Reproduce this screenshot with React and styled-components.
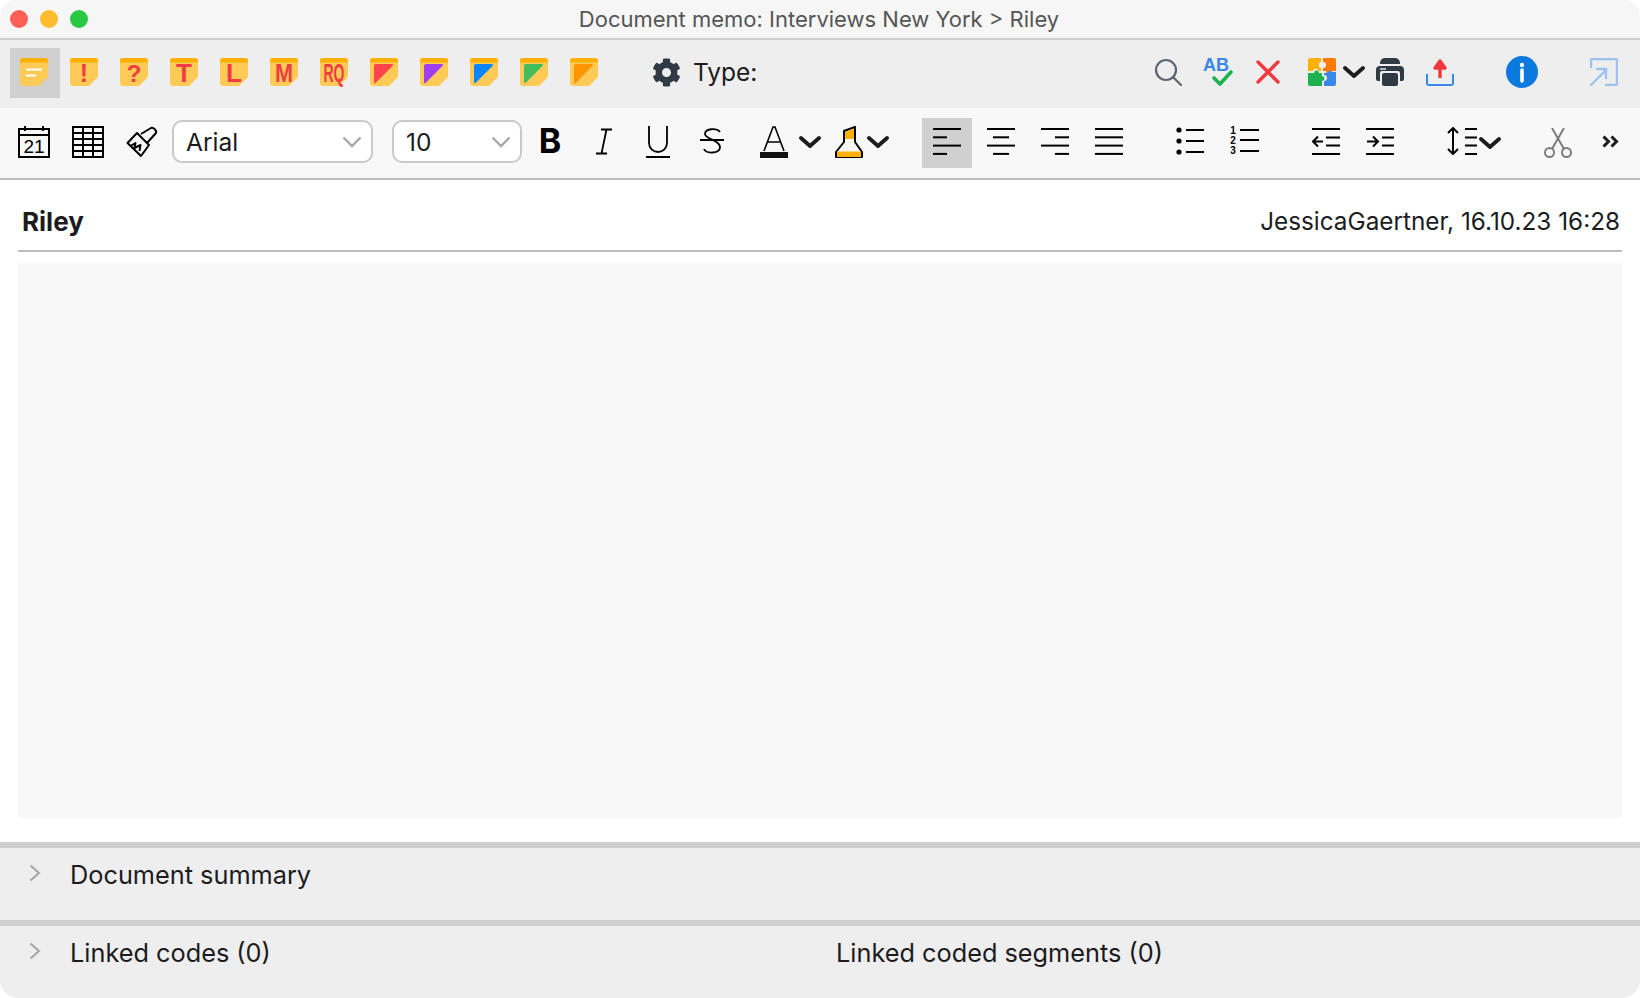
import styled, { createGlobalStyle } from 'styled-components';
import { FaCog } from 'react-icons/fa';

const GlobalStyle = createGlobalStyle`
  html, body {
    margin: 0;
    padding: 0;
    background: #fff;
  }
  body {
    font-family: Inter, "Noto Sans", "Liberation Sans", sans-serif;
    color: #1c1c1e;
  }
`;

const Window = styled.div`
  width: 1640px;
  height: 998px;
  display: flex;
  flex-direction: column;
  border-radius: 18px;
  overflow: hidden;
  background: #fff;
`;

const TitleBar = styled.header`
  height: 38px;
  flex: none;
  display: grid;
  grid-template-columns: 1fr auto 1fr;
  align-items: center;
  padding-right: 2px;
  background: #f6f6f6;
  border-bottom: 2px solid #cfcfcf;
`;

const Lights = styled.div`
  display: flex;
  gap: 12px;
  margin-left: 10px;
`;

const Light = styled.span`
  width: 18px;
  height: 18px;
  border-radius: 50%;
  background: ${(p) => p.$color};
`;

const Title = styled.div`
  font-size: 22px;
  color: #555;
  white-space: nowrap;
`;

const Tool = styled.button`
  width: ${(p) => p.$w || 50}px;
  height: 50px;
  flex: none;
  display: flex;
  align-items: center;
  justify-content: center;
  margin: 0 0 0 ${(p) => p.$ml || 0}px;
  padding: 0 0 ${(p) => p.$lift || 0}px;
  border: 0;
  background: ${(p) => (p.$active ? '#d0d0d0' : 'transparent')};
  color: #000;
`;

const NoteTool = styled(Tool)`
  padding: 0 2px 0 0;
`;

const TopBar = styled.div`
  height: 68px;
  box-sizing: border-box;
  flex: none;
  display: flex;
  align-items: center;
  padding: 0 11px 2px 10px;
  background: #eee;

  ${Tool} {
    padding-bottom: 2px;
  }
`;

const FormatBar = styled.div`
  height: 72px;
  box-sizing: border-box;
  flex: none;
  display: flex;
  align-items: center;
  padding: 0 0 0 7px;
  background: #f8f8f8;
  border-bottom: 2px solid #bdbdbd;
`;

const TypeBox = styled.div`
  display: flex;
  align-items: center;
  gap: 12px;
  margin: 0 0 2px 42px;
  font-size: 24.5px;
  color: #1c1c1e;
  svg {
    width: 29px;
    height: 29px;
    color: #2f3a45;
  }
`;

const PushRight = styled.div`
  display: flex;
  align-items: center;
  margin-left: auto;
`;

const Select = styled.div`
  width: ${(p) => p.$w}px;
  height: 43px;
  flex: none;
  box-sizing: border-box;
  display: flex;
  align-items: center;
  justify-content: space-between;
  margin: 0 0 3px ${(p) => p.$ml}px;
  padding: 0 9px 0 12px;
  background: #fff;
  border: 2px solid #c9c9c9;
  border-radius: 10px;
  font-size: 24.5px;
  color: #1c1c1e;
`;

const StepRow = styled.div`
  display: flex;
  gap: 4px;
  margin-left: ${(p) => p.$ml || 0}px;
`;

const MemoHead = styled.div`
  display: flex;
  align-items: center;
  justify-content: space-between;
  height: 72px;
  box-sizing: border-box;
  margin: 0 18px;
  padding: 12px 2px 0 4px;
  border-bottom: 2px solid #bdbdbd;
`;

const MemoName = styled.strong`
  font-size: 26px;
  font-weight: 700;
`;

const MemoMeta = styled.span`
  font-size: 24.3px;
`;

const MemoBody = styled.div`
  flex: 1;
  margin: 11px 18px 24px;
  background: #f8f8f8;
`;

const Section = styled.section`
  height: 78px;
  box-sizing: border-box;
  flex: none;
  display: flex;
  align-items: flex-start;
  padding: 12px 0 0 29px;
  background: #eee;
  border-top: 6px solid #cfcfcf;
  font-size: 25.3px;
  line-height: 30px;
  color: #1c1c1e;
`;

const Caret = styled.svg`
  width: 12px;
  height: 18px;
  flex: none;
  margin-top: 4px;
  fill: none;
  stroke: #a5a5a5;
  stroke-width: 2;
`;

const SectionLabel = styled.span`
  margin-left: 29px;
  width: ${(p) => (p.$w ? `${p.$w}px` : 'auto')};
`;

const NoteText = styled.text`
  font-family: "Liberation Sans", sans-serif;
  font-weight: 700;
  font-size: ${(p) => p.$size}px;
  fill: #f03c42;
  text-anchor: middle;
`;

const LooseSvg = styled.svg`
  overflow: visible;
`;

const NOTE_MARKS = [
  { text: '!', size: 25, squeeze: 0 },
  { text: '?', size: 24, squeeze: 0 },
  { text: 'T', size: 26, squeeze: 0 },
  { text: 'L', size: 26, squeeze: 0 },
  { text: 'M', size: 25, squeeze: 18 },
];

const FLAGS = ['#ff444b', '#a03ff0', '#0a84ff', '#43bd5b', '#ff9500'];

function NoteShape({ children }) {
  return (
    <LooseSvg width="28" height="28" viewBox="0 0 28 28">
      <path d="M3 0h22a3 3 0 0 1 3 3v16l-9 9H3a3 3 0 0 1-3-3V3a3 3 0 0 1 3-3z" fill="#ffca55" />
      <path d="M3 0h22a3 3 0 0 1 3 3v1.500H0V3a3 3 0 0 1 3-3z" fill="#ffb000" />
      {children}
    </LooseSvg>
  );
}

function NoteMark({ text, size, squeeze }) {
  return (
    <NoteShape>
      <NoteText x="14" y="24" $size={size} {...(squeeze ? { textLength: squeeze, lengthAdjust: 'spacingAndGlyphs' } : {})}>
        {text}
      </NoteText>
    </NoteShape>
  );
}

const Chevron = ({ color = '#1c1c1e' }) => (
  <svg width="22" height="14" viewBox="0 0 22 14" fill="none" stroke={color} strokeWidth="3.800" strokeLinecap="round" strokeLinejoin="round">
    <path d="M2 3l9 8 9-8" />
  </svg>
);

const SelectChevron = () => (
  <svg width="20" height="12" viewBox="0 0 20 12" fill="none" stroke="#a8a8a8" strokeWidth="2.400">
    <path d="M1.500 1.500L10 10l8.500-8.500" />
  </svg>
);

const Icon = ({ children, sw = 2, stroke = '#000', fill = 'none' }) => (
  <svg width="28" height="28" viewBox="0 0 28 28" fill={fill} stroke={stroke} strokeWidth={sw}>
    {children}
  </svg>
);

const Lines = ({ rows }) => (
  <Icon sw={2}>
    {rows.map(([x1, x2], i) => (
      <path key={i} d={`M${x1} ${2 + i * 8.300}H${x2}`} />
    ))}
  </Icon>
);

const Puzzle = () => (
  <svg width="28" height="28" viewBox="0 0 28 28">
    <path d="M2 0h11v4a2.500 2.500 0 0 0-2 3 2.500 2.500 0 0 0 2 3v3h-3a2.500 2.500 0 0 0-5 0H0V2a2 2 0 0 1 2-2z" fill="#ffb000" />
    <path d="M15 0h11a2 2 0 0 1 2 2v11h-4a3 3 0 0 1-6 0h-3v-3a3 3 0 0 0 0-6z" fill="#ff7a00" />
    <path d="M0 15h6a2.500 2.500 0 0 1 5 0h3v3a2.500 2.500 0 0 1 0 5v5H2a2 2 0 0 1-2-2z" fill="#1eb14f" />
    <path d="M16 15h3a3 3 0 0 1 5-1h4v12a2 2 0 0 1-2 2H16v-5a3 3 0 0 0 0-6z" fill="#3b87e8" />
  </svg>
);

const Printer = () => (
  <svg width="28" height="28" viewBox="0 0 28 28">
    <path d="M4 5a5 5 0 0 1 5-5h10a5 5 0 0 1 5 5v1H4z" fill="#2f3a45" />
    <path d="M4 8h20a4 4 0 0 1 4 4v9a2 2 0 0 1-2 2h-2v-8a2 2 0 0 0-2-2H6a2 2 0 0 0-2 2v8H2a2 2 0 0 1-2-2v-9a4 4 0 0 1 4-4z" fill="#2f3a45" />
    <path d="M8 15h12a2 2 0 0 1 2 2v9a2 2 0 0 1-2 2H8a2 2 0 0 1-2-2v-9a2 2 0 0 1 2-2z" fill="#2f3a45" />
    <path d="M4 11h6" stroke="#eee" strokeWidth="1.400" />
  </svg>
);

const NumText = styled.text`
  font-family: "Liberation Sans", sans-serif;
  font-weight: 700;
  font-size: 10px;
  fill: #000;
  stroke: none;
  text-anchor: middle;
`;

export default function App() {
  return (
    <>
      <GlobalStyle />
      <Window>
        <TitleBar>
          <Lights>
            <Light $color="#ff5f57" />
            <Light $color="#febc2e" />
            <Light $color="#28c840" />
          </Lights>
          <Title>Document memo: Interviews New York &gt; Riley</Title>
        </TitleBar>

        <TopBar>
          <NoteTool $active>
            <NoteShape>
              <path d="M6 11.500h16M6 17.500h10" stroke="#fff" strokeWidth="2" />
            </NoteShape>
          </NoteTool>
          {NOTE_MARKS.map((m) => (
            <NoteTool key={m.text}>
              <NoteMark text={m.text} size={m.size} squeeze={m.squeeze} />
            </NoteTool>
          ))}
          <NoteTool>
            <NoteMark text="RQ" size={25} squeeze={21} />
          </NoteTool>
          {FLAGS.map((c) => (
            <NoteTool key={c}>
              <NoteShape>
                <path d="M6 6h16a1 1 0 0 1 .7 1.700L6 24.500A1 1 0 0 1 4 24V8a2 2 0 0 1 2-2z" fill={c} />
              </NoteShape>
            </NoteTool>
          ))}
          <TypeBox>
            <FaCog />
            <span>Type:</span>
          </TypeBox>
          <PushRight>
            <Tool>
              <Icon stroke="#5c6670" sw={2.200}>
                <circle cx="12" cy="12" r="10" />
                <path d="M19.500 19.500L27 27" strokeLinecap="round" />
              </Icon>
            </Tool>
            <Tool>
              <LooseSvg width="30" height="30" viewBox="0 0 30 30">
                <text x="0" y="14" fontFamily="Liberation Sans" fontWeight="700" fontSize="19" fill="#3b87e8" textLength="26" lengthAdjust="spacingAndGlyphs">
                  AB
                </text>
                <path d="M11 21l6 6 11-12" fill="none" stroke="#1eb14f" strokeWidth="3.600" strokeLinecap="round" strokeLinejoin="round" />
              </LooseSvg>
            </Tool>
            <Tool>
              <svg width="24" height="24" viewBox="0 0 24 24" fill="none" stroke="#f0383f" strokeWidth="3.400" strokeLinecap="round">
                <path d="M2 2l20 20M22 2L2 22" />
              </svg>
            </Tool>
            <Tool $w={42} $ml={8}>
              <Puzzle />
            </Tool>
            <Tool $w={22}>
              <Chevron />
            </Tool>
            <Tool>
              <Printer />
            </Tool>
            <Tool>
              <svg width="28" height="28" viewBox="0 0 28 28" fill="none">
                <path d="M1 16v9a2 2 0 0 0 2 2h22a2 2 0 0 0 2-2v-9" stroke="#3b87e8" strokeWidth="2" />
                <path d="M14 20V4M9 10l5-7 5 7z" stroke="#f0383f" strokeWidth="3.400" strokeLinejoin="round" />
              </svg>
            </Tool>
            <Tool $ml={32}>
              <svg width="32" height="32" viewBox="0 0 32 32">
                <circle cx="16" cy="16" r="16" fill="#0a7adf" />
                <circle cx="16" cy="9" r="2.200" fill="#fff" />
                <path d="M16 14v11" stroke="#fff" strokeWidth="3.600" strokeLinecap="round" />
              </svg>
            </Tool>
            <Tool $ml={32}>
              <svg width="28" height="28" viewBox="0 0 28 28" fill="none" stroke="#9dc1f0" strokeWidth="2.400" strokeLinecap="round">
                <path d="M1 9V3a2 2 0 0 1 2-2h22a2 2 0 0 1 2 2v22a2 2 0 0 1-2 2h-9" />
                <path d="M1 27L16 12M7 11h9v9" />
              </svg>
            </Tool>
          </PushRight>
        </TopBar>

        <FormatBar>
          <Tool $w={54} $lift={3}>
            <svg width="32" height="32" viewBox="0 0 32 32" fill="none" stroke="#000" strokeWidth="2">
              <path d="M1 3h30v28H1zM1 9h30M7 0v5M25 0v5" />
              <text x="16" y="26.500" textAnchor="middle" fontFamily="Liberation Sans" fontSize="19" fill="#000" stroke="none">
                21
              </text>
            </svg>
          </Tool>
          <Tool $w={54} $lift={3}>
            <svg width="32" height="32" viewBox="0 0 32 32" fill="none" stroke="#000" strokeWidth="2">
              <path d="M1 1h30v30H1zM1 7h30M1 13h30M1 19h30M1 25h30M11 1v30M21 1v30" />
            </svg>
          </Tool>
          <Tool $w={54} $lift={3}>
            <svg width="32" height="32" viewBox="0 0 32 32" fill="none" stroke="#000" strokeWidth="2" strokeLinejoin="round">
              <path d="M1.500 17L11 7l12 12-8 11zM15 8l10-6c2-1 6 2 5 5l-9 10M4.500 20l5-3-1 5 6-3-1 6" />
            </svg>
          </Tool>
          <Select $w={201} $ml={3}>
            Arial
            <SelectChevron />
          </Select>
          <Select $w={130} $ml={19}>
            10
            <SelectChevron />
          </Select>

          <Tool $w={54} $ml={1} $lift={3}>
            <LooseSvg width="24" height="38" viewBox="0 0 24 38">
              <text x="12" y="30" textAnchor="middle" fontFamily="Inter" fontWeight="700" fontSize="34" fill="#000">
                B
              </text>
            </LooseSvg>
          </Tool>
          <Tool $w={54} $lift={3}>
            <svg width="20" height="28" viewBox="0 0 20 28" fill="none" stroke="#000" strokeWidth="1.800">
              <path d="M7 1.500h11M2 25.500h11M12.500 1.500l-5 24" />
            </svg>
          </Tool>
          <Tool $w={54} $lift={3}>
            <svg width="24" height="32" viewBox="0 0 24 32" fill="none" stroke="#000" strokeWidth="1.800">
              <path d="M3 0v17a9 9 0 0 0 18 0V0" />
              <path d="M0 31h24" strokeWidth="2" />
            </svg>
          </Tool>
          <Tool $w={54} $lift={3}>
            <svg width="24" height="28" viewBox="0 0 24 28" fill="none" stroke="#000" strokeWidth="1.800">
              <path d="M20 4C17 0 5 0 5 6c0 5 15 6 15 13 0 7-14 7-16 2M0 12h24" />
            </svg>
          </Tool>

          <Tool $w={50} $ml={10} $lift={3}>
            <svg width="28" height="32" viewBox="0 0 28 32" fill="none" stroke="#000" strokeWidth="1.600">
              <path d="M4 25L13 1h2l9 24M7.500 16h13" />
              <path d="M0 29h28" stroke="#111" strokeWidth="6" />
            </svg>
          </Tool>
          <Tool $w={22} $lift={3}>
            <Chevron />
          </Tool>
          <Tool $w={36} $ml={10} $lift={3}>
            <svg width="28" height="32" viewBox="0 0 28 32">
              <path d="M1 31v-5l8-10V5l11-4v15l7 10v5z" fill="none" stroke="#000" strokeWidth="2" strokeLinejoin="round" />
              <path d="M10 6l9-3.500V13h-9zM2 25.500h24V31H2z" fill="#ffb000" />
            </svg>
          </Tool>
          <Tool $w={22} $lift={3}>
            <Chevron />
          </Tool>

          <StepRow $ml={33}>
            <Tool $active $lift={4}>
              <Lines rows={[[0, 28], [0, 14], [0, 28], [0, 14]]} />
            </Tool>
            <Tool $lift={4}>
              <Lines rows={[[0, 28], [6, 22], [0, 28], [6, 22]]} />
            </Tool>
            <Tool $lift={4}>
              <Lines rows={[[0, 28], [14, 28], [0, 28], [14, 28]]} />
            </Tool>
            <Tool $lift={4}>
              <Lines rows={[[0, 28], [0, 28], [0, 28], [0, 28]]} />
            </Tool>
          </StepRow>

          <StepRow $ml={31}>
            <Tool $lift={4}>
              <Icon>
                <circle cx="3" cy="3" r="2.600" fill="#000" stroke="none" />
                <circle cx="3" cy="14" r="2.600" fill="#000" stroke="none" />
                <circle cx="3" cy="25" r="2.600" fill="#000" stroke="none" />
                <path d="M10 3h18M10 14h18M10 25h18" />
              </Icon>
            </Tool>
            <Tool $lift={4}>
              <svg width="30" height="32" viewBox="0 0 30 32" fill="none" stroke="#000" strokeWidth="2">
                <NumText x="4" y="9">1</NumText>
                <NumText x="4" y="19">2</NumText>
                <NumText x="4" y="29">3</NumText>
                <path d="M11 5h19M11 15h19M11 26h19" />
              </svg>
            </Tool>
          </StepRow>

          <StepRow $ml={32}>
            <Tool $lift={4}>
              <Icon>
                <path d="M0 2h28M14 10.500h14M14 18.500h14M0 27h28M11 14.500H1M6 9.500l-5 5 5 5" />
              </Icon>
            </Tool>
            <Tool $lift={4}>
              <Icon>
                <path d="M0 2h28M16 10.500h12M16 18.500h12M0 27h28M1 14.500h11M7 9.500l5 5-5 5" />
              </Icon>
            </Tool>
          </StepRow>

          <Tool $w={32} $ml={41} $lift={4}>
            <svg width="30" height="28" viewBox="0 0 30 28" fill="none" stroke="#000" strokeWidth="2">
              <path d="M6 1v26M1 6l5-5 5 5M1 22l5 5 5-5M18 2h12M18 10.500h12M18 18.500h12M18 27h12" />
            </svg>
          </Tool>
          <Tool $w={24}>
            <Chevron />
          </Tool>
          <Tool $ml={31}>
            <svg width="28" height="30" viewBox="0 0 28 30" fill="none" stroke="#7d7d7d" strokeWidth="2">
              <circle cx="5.500" cy="24.500" r="4.500" />
              <circle cx="22.500" cy="24.500" r="4.500" />
              <path d="M8 21L20 0M20 21L8 0" />
            </svg>
          </Tool>
          <Tool $ml={2} $lift={3}>
            <svg width="17" height="13" viewBox="0 0 17 13" fill="none" stroke="#1c1c1e" strokeWidth="3">
              <path d="M1.500 1.500l5 5-5 5M9.500 1.500l5 5-5 5" />
            </svg>
          </Tool>
        </FormatBar>

        <MemoHead>
          <MemoName>Riley</MemoName>
          <MemoMeta>JessicaGaertner, 16.10.23 16:28</MemoMeta>
        </MemoHead>
        <MemoBody />

        <Section>
          <Caret viewBox="0 0 12 18">
            <path d="M1.500 1.500L10 9l-8.500 7.500" />
          </Caret>
          <SectionLabel>Document summary</SectionLabel>
        </Section>
        <Section>
          <Caret viewBox="0 0 12 18">
            <path d="M1.500 1.500L10 9l-8.500 7.500" />
          </Caret>
          <SectionLabel $w={766}>Linked codes (0)</SectionLabel>
          <span>Linked coded segments (0)</span>
        </Section>
      </Window>
    </>
  );
}
